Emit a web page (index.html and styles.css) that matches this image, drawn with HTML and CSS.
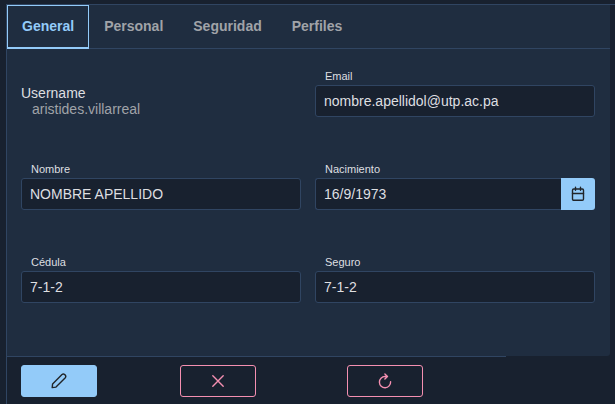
FILE: index.html
```
<!DOCTYPE html>
<html lang="es">
<head>
<meta charset="utf-8">
<meta name="viewport" content="width=device-width, initial-scale=1">
<title>Perfil de usuario</title>
<link rel="stylesheet" href="styles.css">
</head>
<body>
<main class="page">
  <section class="panel">
    <div class="tabs" role="tablist">
      <button class="tab tab-active" type="button" role="tab" aria-selected="true">General</button>
      <button class="tab" type="button" role="tab" aria-selected="false">Personal</button>
      <button class="tab" type="button" role="tab" aria-selected="false">Seguridad</button>
      <button class="tab" type="button" role="tab" aria-selected="false">Perfiles</button>
    </div>
    <form class="fields">
      <div class="account">
        <div>Username</div>
        <div class="account-name">aristides.villarreal</div>
      </div>
      <div class="field">
        <label for="email">Email</label>
        <input id="email" type="text" value="nombre.apellidol@utp.ac.pa">
      </div>
      <div class="field">
        <label for="nombre">Nombre</label>
        <input id="nombre" type="text" value="NOMBRE APELLIDO">
      </div>
      <div class="field">
        <label for="nacimiento">Nacimiento</label>
        <div class="date">
          <input id="nacimiento" type="text" value="16/9/1973">
          <button class="date-button" type="button" aria-label="Abrir calendario">
            <svg width="14" height="16" viewBox="0 0 14 16"><rect x="1.500" y="3" width="11" height="11.300" rx="1.200"/><path d="M1.500 7.500H12.500M4.500 1.300V4.300M9.500 1.300V4.300"/></svg>
          </button>
        </div>
      </div>
      <div class="field">
        <label for="cedula">Cédula</label>
        <input id="cedula" type="text" value="7-1-2">
      </div>
      <div class="field">
        <label for="seguro">Seguro</label>
        <input id="seguro" type="text" value="7-1-2">
      </div>
    </form>
  </section>
  <footer class="actions">
    <button class="action action-primary" type="button" aria-label="Editar">
      <svg width="16" height="16" viewBox="0 0 16 16"><path d="M1.200 14.600L1.600 10.900L11 1.500Q12.300 0.500 13.700 1.500L14.300 2.200Q15.300 3.500 14.300 4.800L5 14.100Z"/></svg>
    </button>
    <button class="action" type="button" aria-label="Cancelar">
      <svg width="14" height="14" viewBox="0 0 14 14"><path d="M1.800 1.800L12.200 12.200M12.200 1.800L1.800 12.200"/></svg>
    </button>
    <button class="action" type="button" aria-label="Recargar">
      <svg width="14" height="16" viewBox="0 0 14 16"><path d="M12.600 8.800A5.600 5.600 0 1 1 7 3.500H9.500M6.900 1L9.500 3.500L6.900 6"/></svg>
    </button>
  </footer>
</main>
</body>
</html>
```
FILE: styles.css
```
* {
  box-sizing: border-box;
}

body {
  margin: 0;
  padding: 4px 0 0 6px;
  background: #18212f;
  color: #dedfe1;
  font: 14px/16px "Liberation Sans", Arial, sans-serif;
}

button,
input {
  margin: 0;
  font: inherit;
}

svg {
  display: block;
  fill: none;
  stroke: currentColor;
  stroke-width: 1.4;
  stroke-linecap: round;
  stroke-linejoin: round;
}

.page {
  min-height: calc(100vh - 4px);
  border: solid #304562;
  border-width: 1px 0 0 1px;
}

.panel {
  margin-right: 5px;
  background: #1f2d40;
  border-radius: 0 0 3px 0;
}

.tabs {
  display: flex;
  height: 44px;
  border-bottom: 1px solid #304562;
}

.tab {
  height: 44px;
  padding: 0 14px 2px;
  border: 1px solid transparent;
  background: none;
  color: #a0a3a8;
  font-weight: 700;
}

.tab-active {
  border-color: #93cbf9;
  border-bottom-width: 2px;
  color: #93cbf9;
}

.fields {
  display: grid;
  grid-template-columns: 1fr 1fr;
  grid-auto-rows: 93px;
  gap: 0 14px;
  padding: 20px 15px 8px 14px;
}

.account {
  padding-top: 16px;
}

.account-name {
  padding-left: 11px;
  color: #a0a3a8;
}

.field label {
  display: block;
  margin: 0 0 2px 10px;
  font-size: 11px;
  line-height: 14px;
}

.field input {
  width: 100%;
  height: 32px;
  padding: 0 8px;
  border: 1px solid #304562;
  border-radius: 3px;
  background: #18212f;
  color: inherit;
}

.date {
  display: flex;
}

.field .date input {
  flex: 1;
  min-width: 0;
  border-right: 0;
  border-radius: 3px 0 0 3px;
}

.date-button {
  display: grid;
  place-items: center;
  width: 34px;
  height: 32px;
  padding: 0;
  border: 0;
  border-radius: 0 3px 3px 0;
  background: #93cbf9;
  color: #212529;
}

.actions {
  display: grid;
  grid-template-columns: 159fr 167fr 159fr;
  width: 82%;
  padding: 8px 0 7px 14px;
  border-top: 1px solid #304562;
}

.action {
  display: grid;
  place-items: center;
  width: 76px;
  height: 32px;
  padding: 0;
  border: 1px solid #f48fb1;
  border-radius: 3px;
  background: none;
  color: #f48fb1;
}

.action-primary {
  border-color: #93cbf9;
  background: #93cbf9;
  color: #212529;
}
```
